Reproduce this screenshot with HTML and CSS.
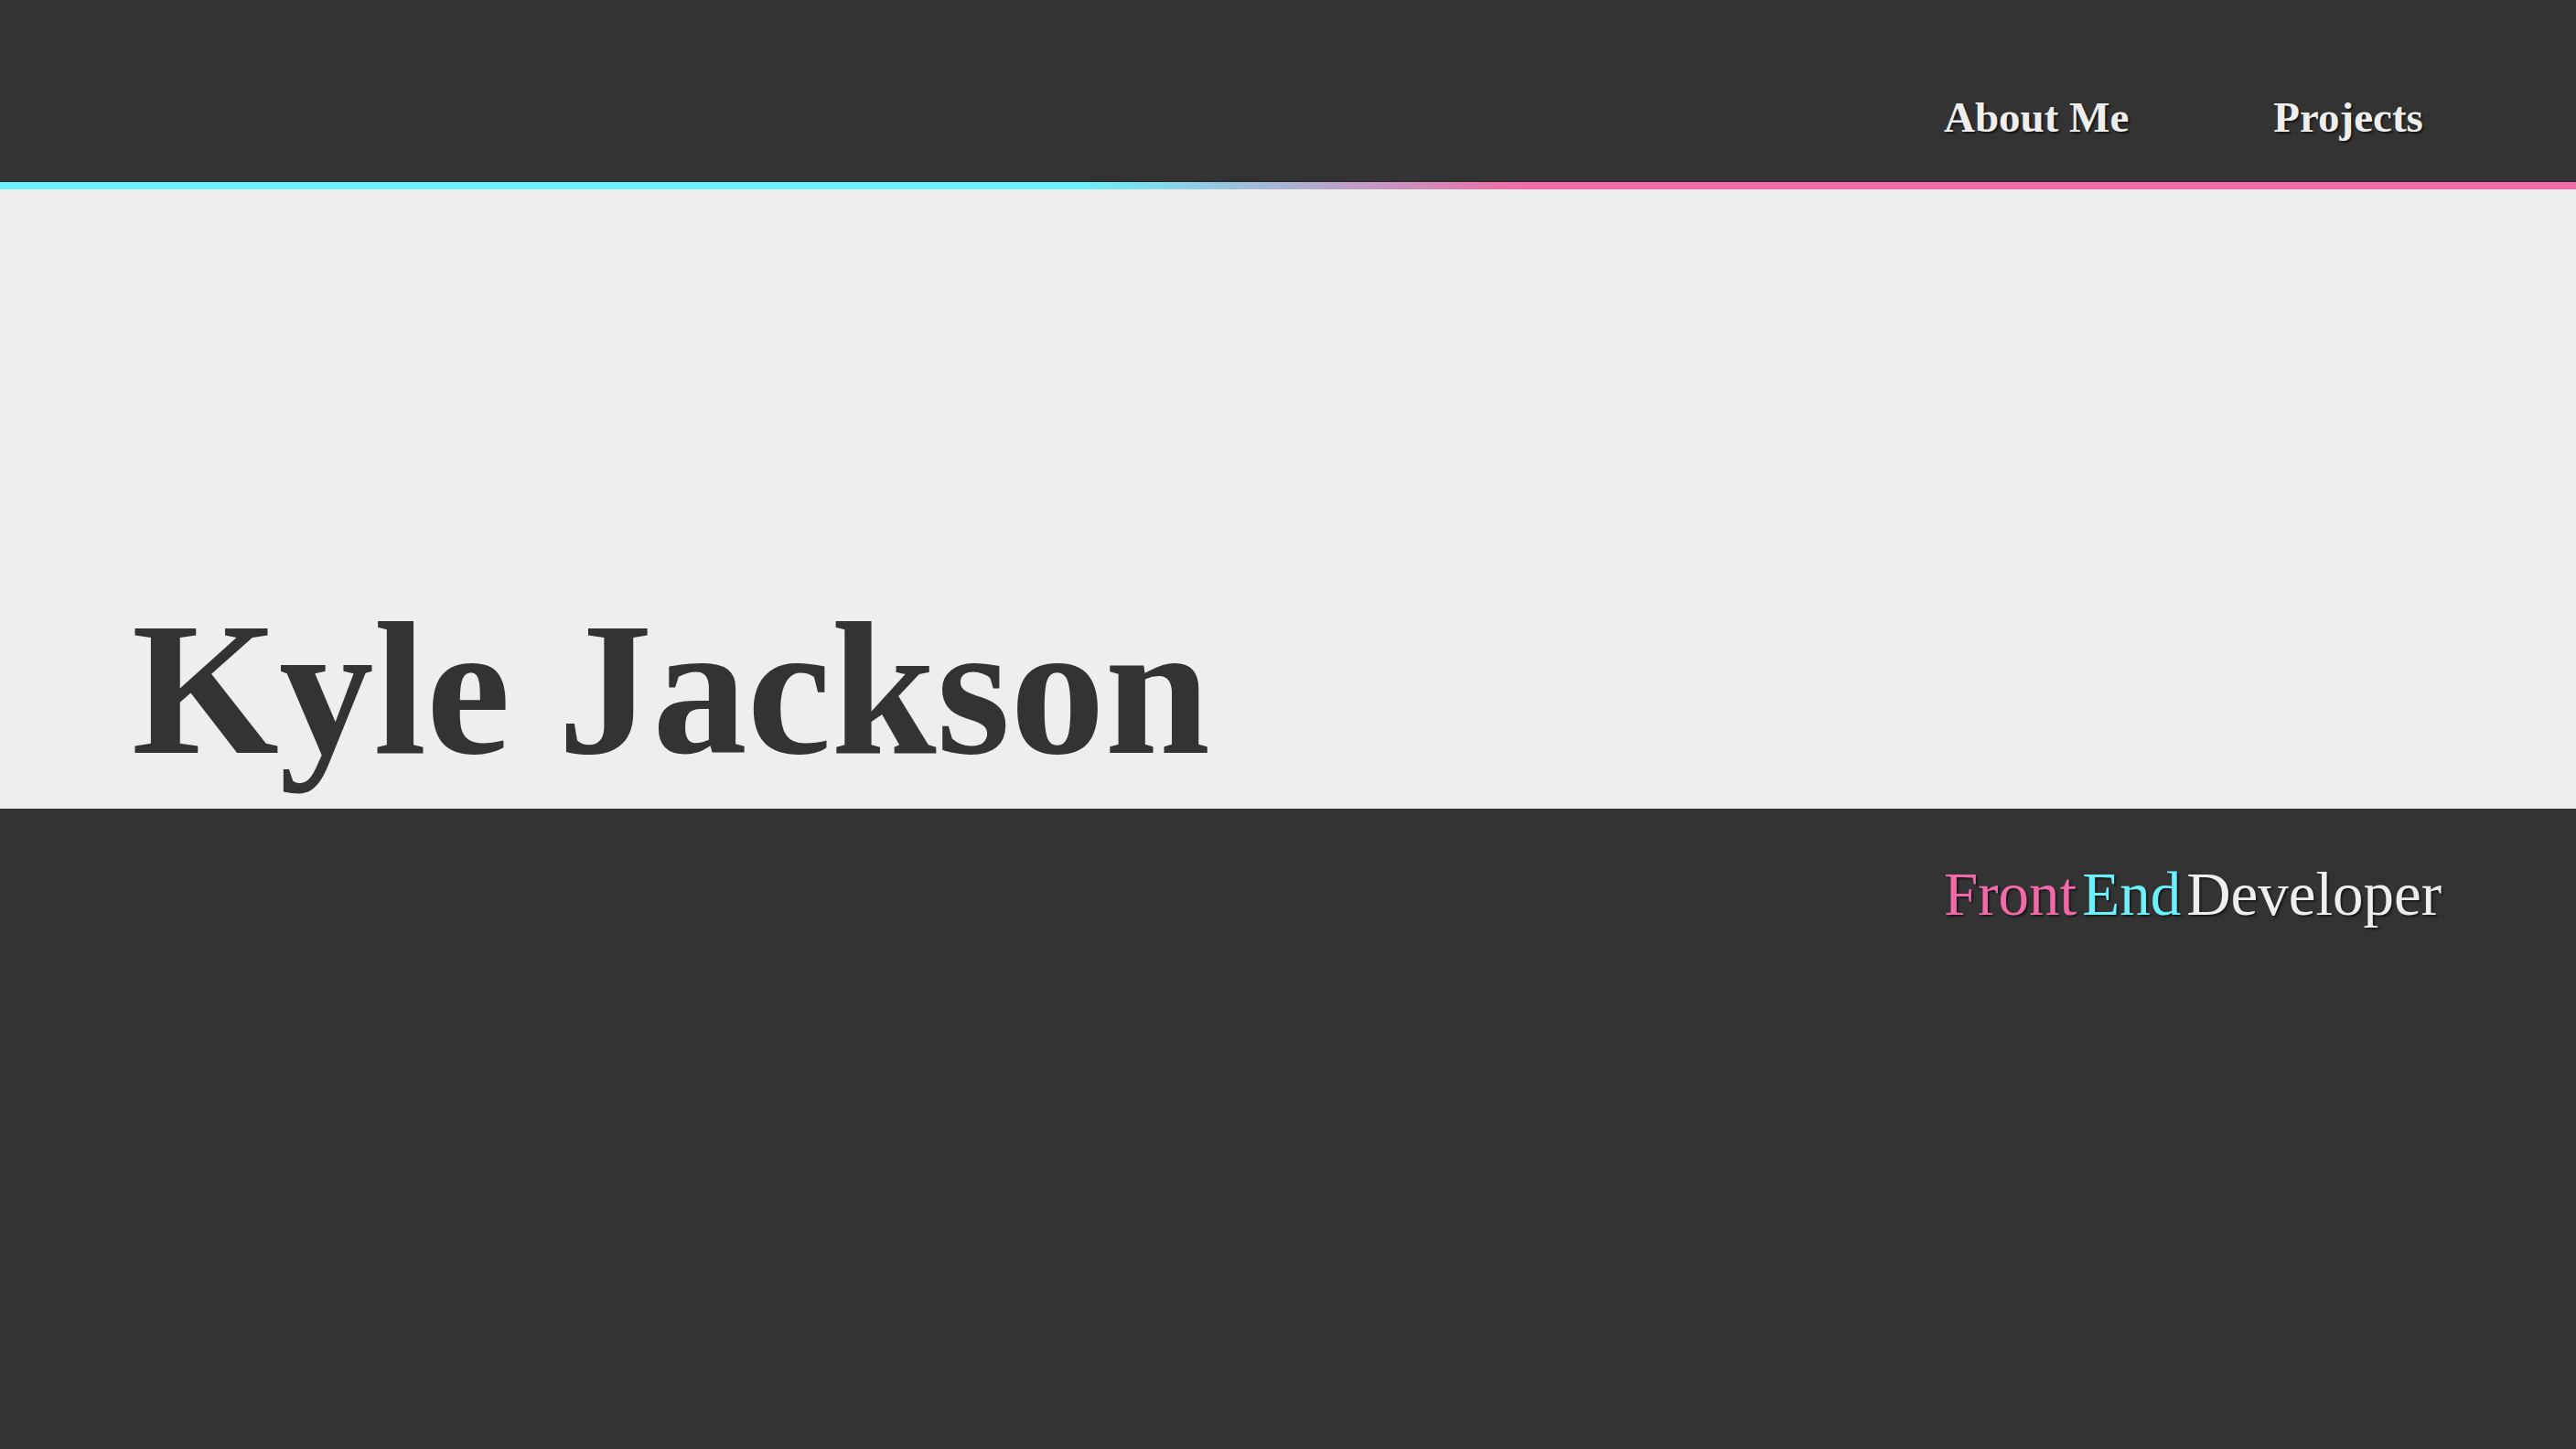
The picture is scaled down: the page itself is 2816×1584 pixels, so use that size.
FILE: index.html
```html
<!DOCTYPE html>
<html lang="en">
<head>
<meta charset="utf-8">
<title>Kyle Jackson</title>
<link rel="stylesheet" href="styles.css">
</head>
<body>
<header class="site-header">
  <nav class="nav">
    <a class="nav-link" href="#about">About Me</a>
    <a class="nav-link" href="#projects">Projects</a>
  </nav>
</header>
<div class="accent-bar"></div>
<section class="hero">
  <h1 class="hero-title">Kyle Jackson</h1>
</section>
<section class="intro">
  <p class="role">
    <span class="role-front">Front</span><span class="role-end">End</span><span class="role-dev">Developer</span>
  </p>
</section>
</body>
</html>
```
FILE: styles.css
```css
html, body {
  margin: 0;
  padding: 0;
}
body {
  background: #333333;
  font-family: "Liberation Serif", "Times New Roman", serif;
  min-height: 1584px;
}
.site-header {
  box-sizing: border-box;
  height: 199px;
  padding-top: 105px;
  padding-left: 2125px;
  background: #333333;
  border-bottom: 1px solid #262626;
}
.nav {
  display: flex;
  gap: 158px;
}
.nav-link {
  font-size: 47px;
  line-height: 1;
  font-weight: 700;
  color: #eeeeee;
  text-decoration: none;
  text-shadow: 2px 2px 2px rgba(0, 0, 0, 0.55);
}
.accent-bar {
  height: 8px;
  background: linear-gradient(to right, #6cf0fb 0%, #6cf0fb 42%, #f26ca8 59%, #f26ca8 100%);
}
.hero {
  box-sizing: border-box;
  height: 677px;
  background: #eeeeee;
  display: flex;
  align-items: flex-end;
  padding-left: 144px;
  padding-bottom: 27px;
}
.hero-title {
  margin: 0;
  font-size: 207px;
  line-height: 1;
  font-weight: 700;
  color: #333333;
}
.intro {
  padding-top: 60px;
  padding-left: 2125px;
}
.role {
  margin: 0;
  display: flex;
  gap: 6px;
  font-size: 67px;
  line-height: 1;
  text-shadow: 2px 2px 2px rgba(0, 0, 0, 0.5);
}
.role-front { color: #f06aa8; }
.role-end { color: #6cf0fb; }
.role-dev { color: #eeeeee; }
```
